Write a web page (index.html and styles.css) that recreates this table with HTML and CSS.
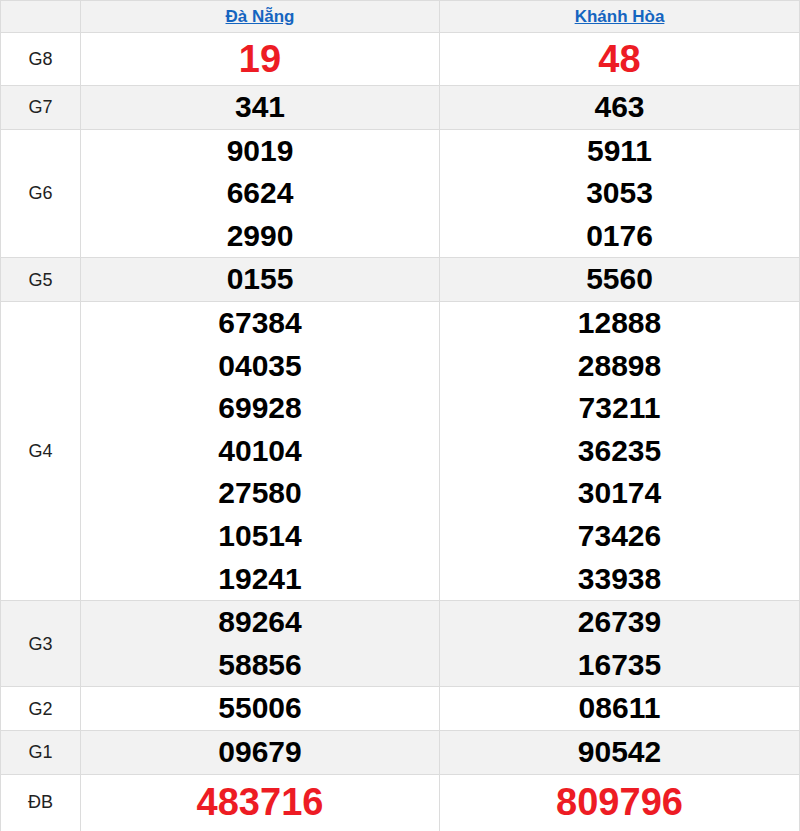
FILE: index.html
```html
<!DOCTYPE html>
<html lang="vi">
<head>
<meta charset="utf-8">
<title>XSMT</title>
<link rel="stylesheet" href="styles.css">
</head>
<body>
<table class="kq">
  <colgroup><col class="c-lbl"><col class="c-prov"><col class="c-prov2"></colgroup>
  <thead>
    <tr class="hdr"><th></th><th><a href="#">Đà Nẵng</a></th><th><a href="#">Khánh Hòa</a></th></tr>
  </thead>
  <tbody>
    <tr class="big"><td class="lbl">G8</td><td class="red"><div>19</div></td><td class="red"><div>48</div></td></tr>
    <tr class="alt"><td class="lbl">G7</td><td><div>341</div></td><td><div>463</div></td></tr>
    <tr><td class="lbl">G6</td><td><div>9019</div><div>6624</div><div>2990</div></td><td><div>5911</div><div>3053</div><div>0176</div></td></tr>
    <tr class="alt"><td class="lbl">G5</td><td><div>0155</div></td><td><div>5560</div></td></tr>
    <tr><td class="lbl">G4</td><td><div>67384</div><div>04035</div><div>69928</div><div>40104</div><div>27580</div><div>10514</div><div>19241</div></td><td><div>12888</div><div>28898</div><div>73211</div><div>36235</div><div>30174</div><div>73426</div><div>33938</div></td></tr>
    <tr class="alt"><td class="lbl">G3</td><td><div>89264</div><div>58856</div></td><td><div>26739</div><div>16735</div></td></tr>
    <tr><td class="lbl">G2</td><td><div>55006</div></td><td><div>08611</div></td></tr>
    <tr class="alt"><td class="lbl">G1</td><td><div>09679</div></td><td><div>90542</div></td></tr>
    <tr class="big last"><td class="lbl">ĐB</td><td class="red"><div>483716</div></td><td class="red"><div>809796</div></td></tr>
  </tbody>
</table>
</body>
</html>
```
FILE: styles.css
```css
html, body {
  margin: 0;
  padding: 0;
  background: #fff;
}
body {
  font-family: "Liberation Sans", Arial, sans-serif;
  color: #000;
}
.kq {
  border-collapse: collapse;
  table-layout: fixed;
  width: 799px;
}
.c-lbl { width: 80px; }
.c-prov { width: 359px; }
.c-prov2 { width: 360px; }
.kq th, .kq td {
  border: 1px solid #dcdcdc;
  padding: 0;
  text-align: center;
  vertical-align: middle;
}
.hdr th {
  background: #f2f2f2;
  height: 31px;
  font-size: 17px;
  font-weight: bold;
}
.hdr a {
  color: #1565c0;
  text-decoration: underline;
}
.alt td { background: #f2f2f2; }
.kq td {
  font-weight: bold;
  font-size: 30px;
  line-height: 42.6px;
}
.kq td.lbl {
  font-weight: normal;
  font-size: 18px;
  color: #222;
  line-height: 20px;
}
.big td div {
  line-height: 52px;
}
.last td {
  vertical-align: top;
  padding-top: 1px;
  padding-bottom: 10px;
}
.last td.lbl {
  padding-top: 17px;
}
.red {
  color: #ed1c24;
  font-size: 38px !important;
}
```
